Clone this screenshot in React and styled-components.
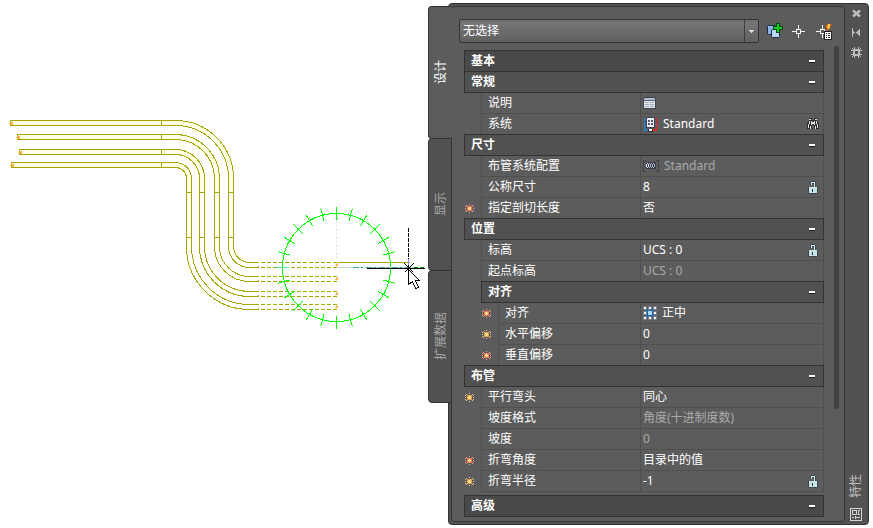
import React, { useState } from 'react';
import styled, { createGlobalStyle } from 'styled-components';

const sections = [
  { title: '基本', dark: true, rows: [] },
  {
    title: '常规',
    rows: [
      { label: '说明', icon: 'sheet' },
      { label: '系统', value: 'Standard', icon: 'system', action: 'find' }
    ]
  },
  {
    title: '尺寸',
    rows: [
      { label: '布管系统配置', value: 'Standard', icon: 'routing', muted: true },
      { label: '公称尺寸', value: '8', action: 'lock' },
      { label: '指定剖切长度', value: '否', marker: 'red' }
    ]
  },
  {
    title: '位置',
    rows: [
      { label: '标高', value: 'UCS : 0', action: 'lock' },
      { label: '起点标高', value: 'UCS : 0', muted: true }
    ]
  },
  {
    title: '对齐',
    nested: true,
    rows: [
      { label: '对齐', value: '正中', icon: 'align', marker: 'red' },
      { label: '水平偏移', value: '0', marker: 'yellow' },
      { label: '垂直偏移', value: '0', marker: 'red' }
    ]
  },
  {
    title: '布管',
    rows: [
      { label: '平行弯头', value: '同心', marker: 'yellow' },
      { label: '坡度格式', value: '角度(十进制度数)', muted: true },
      { label: '坡度', value: '0', muted: true },
      { label: '折弯角度', value: '目录中的值', marker: 'red' },
      { label: '折弯半径', value: '-1', marker: 'yellow', action: 'lock' }
    ]
  },
  { title: '高级', dark: true, spaced: true, rows: [] }
];

// top/left are where a pipe starts, x is its left wall in the vertical run
const pipes = [
  { left: 10, top: 120, x: 228, bottom: 262 },
  { left: 17, top: 134, x: 214, bottom: 276 },
  { left: 19, top: 149, x: 199, bottom: 291 },
  { left: 11, top: 162, x: 186, bottom: 304 }
];

const Pipe = ({ left, top, x, bottom }) => {
  const outer = x + 5 - 175;
  const inner = x - 175;
  const lowOuter = 249 - x;
  const lowInner = 244 - x;
  return (
    <g>
      <path
        d={`M${left} ${top}H175A${outer} ${outer} 0 0 1 ${x + 5} 178V192H${x}V178A${inner} ${inner} 0 0 0 175 ${top + 5}H${left}Z`}
        fill="#ffffe6"
      />
      <path d={`M161 ${top}V${top + 5}M${x} 237H${x + 5}M258 ${bottom + 3}V${bottom + 5}`} />
      <path
        d={`M${x + 5} 192V246A${lowInner} ${lowInner} 0 0 0 249 ${bottom}H258M${x} 192V246A${lowOuter} ${lowOuter} 0 0 0 249 ${bottom + 5}H258`}
      />
      <path d={`M260 ${bottom}H336M260 ${bottom + 5}H336`} strokeDasharray="4 2" />
      <path d={`M${left - 2} ${top + 3}h4m-3 -1h3m-2 2h2`} stroke="#f5b04c" />
      <path d={`M334 ${bottom + 3}h3m-2 -1h2m-1 -1h1`} stroke="#ffb04a" />
    </g>
  );
};

const Drawing = () => (
  <Canvas viewBox="0 0 428 528" role="img" aria-label="布管">
    <g transform="translate(0.5 0.5)" fill="none" shapeRendering="crispEdges">
      <g stroke="#a6a600">
        {pipes.map((pipe) => (
          <Pipe key={pipe.x} {...pipe} />
        ))}
        <path d="M337 262H409" />
      </g>
      <path d="M336 216V257" stroke="#c4c4c4" strokeDasharray="1 3" />
      <path d="M334 218h4m-3 1h2" stroke="#d0d0d0" />
      <g stroke="#00ff00">
        <circle cx="336" cy="267" r="54" />
        {Array.from({ length: 24 }, (_, i) => (
          <path key={i} d="M336 206V219" transform={`rotate(${i * 15} 336 267)`} />
        ))}
      </g>
      <path d="M276 267H288" stroke="#58e0c0" />
      <path d="M337 267H418" stroke="#b9dccb" />
      <path d="M352 267H410" stroke="#3aa0a0" strokeDasharray="6 2 2 3" />
      <path d="M413 267H424" stroke="#009000" strokeDasharray="4 2" />
      <path d="M366 268H424M408 263V284" stroke="#000" />
      <path d="M408 227V263" stroke="#000" strokeDasharray="4 1" />
      <path d="M408 258V264" stroke="#8c8cff" />
      <path d="M404 263L413 272M413 263L404 272" stroke="#000" />
      <path
        d="M408 269V284L412 281L415 288L418 287L415 280H419Z"
        fill="#fff"
        stroke="#000"
      />
    </g>
  </Canvas>
);

const Marker = ({ tone }) => (
  <MarkerSvg viewBox="0 0 9 9" shapeRendering="crispEdges">
    <path
      d="M4 0h1v1h-1zM4 8h1v1h-1zM0 4h1v1h-1zM8 4h1v1h-1zM1 1h1v1h-1zM7 1h1v1h-1zM1 7h1v1h-1zM7 7h1v1h-1zM0 2h1v1h-1zM8 2h1v1h-1zM0 6h1v1h-1zM8 6h1v1h-1z"
      fill={tone === 'red' ? '#f99a90' : '#e9c08a'}
    />
    <path
      d="M3 2h3v5h-3zM2 3h5v3h-5zM2 2h1v1h-1zM6 2h1v1h-1zM2 6h1v1h-1zM6 6h1v1h-1z"
      fill={tone === 'red' ? '#f57a5e' : '#e0a050'}
    />
    <path d="M3 3h3v3h-3z" fill={tone === 'red' ? '#ffb45c' : '#ffcc5e'} />
    <path d="M4 3h1v3h-1zM3 4h3v1h-3z" fill="#ffe690" />
  </MarkerSvg>
);

const LockIcon = () => (
  <svg width="10" height="13" viewBox="0 0 10 13" shapeRendering="crispEdges">
    <path d="M3 0h4v1H3zM2 1h1v3H2zM7 1h1v5H7zM4 2h2v1H4z" fill="#3a474e" />
    <path d="M3 1h4v1H3zM3 2h1v2H3zM6 2h1v4H6z" fill="#d3e8e8" />
    <path d="M0 6h10v6H0zM1 12h8v1H1z" fill="#3a474e" />
    <path d="M1 6h8v6H1z" fill="#c9e4e4" />
    <path d="M4 8h1v3H4z" fill="#24343a" />
  </svg>
);

const FindIcon = () => (
  <svg width="12" height="12" viewBox="0 0 12 12" shapeRendering="crispEdges">
    <path d="M2 0h3v2h2V0h3v3h1v2h1v6H7V7H5v4H0V5h1V3h1z" fill="#2c2c2c" />
    <path
      d="M2 1h2v1H2zM8 1h2v1H8zM2 3h1v3H2zM4 3h1v4H4zM7 3h1v4H7zM9 3h1v3H9zM1 6h1v4H1zM3 8h1v3H3zM8 8h1v3H8zM10 6h1v4h-1zM5 4h2v2H5z"
      fill="#e2e2e2"
    />
  </svg>
);

const valueIcons = {
  sheet: (
    <svg width="13" height="12" viewBox="0 0 13 12" shapeRendering="crispEdges">
      <path d="M0 0h13v12H0z" fill="#3c4250" />
      <path d="M1 1h11v10H1z" fill="#e3e7ec" />
      <path d="M1 1h11v2H1z" fill="#aebccd" />
      <path d="M1 3h11v1H1z" fill="#5b6472" />
      <path d="M2 5h4v1H2zM7 5h4v1H7zM2 7h4v1H2zM7 7h4v1H7zM2 9h4v1H2zM7 9h4v1H7z" fill="#a3adba" />
    </svg>
  ),
  system: (
    <svg width="15" height="16" viewBox="0 0 15 16" shapeRendering="crispEdges">
      <path d="M1 3h2v1H2v9h2v2H1z" fill="#1488e8" />
      <path d="M12 2h2v1h-2zM13 3h1v12h-1zM10 13h3v2h-3z" fill="#e22626" />
      <path d="M3 1h9v11H3z" fill="#3f4256" />
      <path d="M4 2h7v9H4z" fill="#edf0f5" />
      <path d="M7 0h1v2H7z" fill="#5747a8" />
      <path d="M5 4h2v2H5zM8 4h2v2H8zM5 7h2v2H5zM8 7h2v2H8z" fill="#535b70" />
      <path d="M5 13h5v3H5z" fill="#252932" />
      <path d="M6 13h3v2H6z" fill="#fff" />
    </svg>
  ),
  routing: (
    <svg width="16" height="12" viewBox="0 0 16 12" shapeRendering="crispEdges">
      <path d="M0 0h3v1H1v10h2v1H0zM13 0h3v12h-3v-1h2V1h-2z" fill="#3d424e" />
      <path d="M3 2h10v7H3z" fill="#373d4b" />
      <path d="M4 3h1v1H4zM4 7h1v1H4zM3 4h1v3H3zM5 4h1v3H5z" fill="#eceff5" />
      <path d="M6 3h1v1H6zM7 4h1v3H7zM6 7h1v1H6zM8 3h1v1H8zM9 4h1v3H9zM8 7h1v1H8zM10 3h1v1h-1zM11 4h1v3h-1zM10 7h1v1h-1z" fill="#aeb6c5" />
    </svg>
  ),
  align: (
    <svg width="14" height="14" viewBox="0 0 14 14" shapeRendering="crispEdges">
      <path d="M0 0h4v4H0zM5 0h4v4H5zM10 0h4v4h-4zM0 5h4v4H0zM10 5h4v4h-4zM0 10h4v4H0zM5 10h4v4H5zM10 10h4v4h-4z" fill="#777e88" />
      <path d="M1 1h2v2H1zM6 1h2v2H6zM11 1h2v2h-2zM1 6h2v2H1zM11 6h2v2h-2zM1 11h2v2H1zM6 11h2v2H6zM11 11h2v2h-2z" fill="#eef1f4" />
      <path d="M3 4h8v1H3zM3 9h8v1H3zM4 3h1v8H4zM9 3h1v8H9z" fill="#1263b8" />
      <path d="M5 5h4v4H5z" fill="#a7d8f5" />
    </svg>
  )
};

const Section = ({ title, dark, nested, spaced, rows }) => {
  const [open, setOpen] = useState(true);

  return (
    <SectionBox $nested={nested} $spaced={spaced}>
      <SectionHeader $dark={dark}>
        <SectionTitle>{title}</SectionTitle>
        <ToggleButton aria-label={title} aria-expanded={open} onClick={() => setOpen(!open)}>
          <Minus />
        </ToggleButton>
      </SectionHeader>
      {open && rows.length > 0 && (
        <PropertyTable>
          <tbody>
            {rows.map((row) => (
              <tr key={row.label}>
                <MarkerCell>{row.marker && <Marker tone={row.marker} />}</MarkerCell>
                <LabelCell scope="row" $nested={nested}>
                  {row.label}
                </LabelCell>
                <ValueCell $muted={row.muted}>
                  <ValueLine>
                    {valueIcons[row.icon]}
                    <span>{row.value}</span>
                    {row.action && (
                      <RowButton aria-label={row.label}>
                        {row.action === 'lock' ? <LockIcon /> : <FindIcon />}
                      </RowButton>
                    )}
                  </ValueLine>
                </ValueCell>
              </tr>
            ))}
          </tbody>
        </PropertyTable>
      )}
    </SectionBox>
  );
};

const Toolbar = () => (
  <ToolbarBox>
    <SelectBox>
      <SelectionSelect aria-label="选择">
        <option>无选择</option>
      </SelectionSelect>
      <SelectArrow>
        <svg width="5" height="3" viewBox="0 0 5 3" shapeRendering="crispEdges">
          <path d="M0 0h5v1H4v1H3v1H2V2H1V1H0z" fill="#e0e0e0" />
        </svg>
      </SelectArrow>
    </SelectBox>
    <IconButton aria-label="添加到选择">
      <svg width="16" height="16" viewBox="0 0 16 16">
        <rect x="0.500" y="2.500" width="9" height="9" rx="1" fill="#8db4e6" stroke="#1e2c42" />
        <rect x="4.500" y="6.500" width="8" height="8" rx="1" fill="#b9d6f7" stroke="#1e2c42" />
        <path d="M9 0h4v3h3v4h-3v3H9V7H6V3h3z" fill="#0a4a10" />
        <path d="M10 1h2v3h3v2h-3v3h-2V6H7V4h3z" fill="#10d020" />
      </svg>
    </IconButton>
    <IconButton aria-label="选择对象">
      <svg width="16" height="16" viewBox="0 0 16 16" shapeRendering="crispEdges">
        <path d="M7.500 2V6M7.500 11V15M1 8.500H5M10 8.500H14M5.500 6.500H9.500V10.500H5.500Z" fill="none" stroke="#f4f4f4" />
      </svg>
    </IconButton>
    <IconButton aria-label="快速选择">
      <svg width="18" height="17" viewBox="0 0 18 17">
        <path d="M7.500 2V6M7.500 11V15M1 8.500H5M5.500 6.500H9.500V10.500H5.500Z" fill="none" stroke="#f4f4f4" shapeRendering="crispEdges" />
        <path d="M12 1H17L14.500 4H16.500L10.500 9L12.500 5H10.500Z" fill="#ff9a1c" stroke="#923b08" strokeWidth="0.500" />
        <path d="M13 2H15L13 5H14.500" fill="none" stroke="#ffe28a" />
        <g shapeRendering="crispEdges">
          <path d="M9 8h8v9H9z" fill="#222" />
          <path d="M10 9h6v7h-6z" fill="#fff" />
          <path d="M11 10h1v1h-1zM13 10h2v1h-2zM11 12h1v1h-1zM13 12h2v1h-2zM11 14h1v1h-1zM13 14h2v1h-2z" fill="#222" />
        </g>
      </svg>
    </IconButton>
  </ToolbarBox>
);

const TitleStrip = () => (
  <Strip>
    <StripButton aria-label="关闭">
      <svg width="9" height="9" viewBox="0 0 9 9">
        <path d="M1 1.500L8 7.500M8 1.500L1 7.500" stroke="#bcbcbc" strokeWidth="2.600" />
      </svg>
    </StripButton>
    <StripButton aria-label="自动隐藏">
      <svg width="9" height="9" viewBox="0 0 9 9" shapeRendering="crispEdges">
        <path d="M0 0h1v9H0zM1 3h1v3H1zM2 4h1v1H2zM7 1h1v7H7zM6 2h1v5H6zM5 3h1v3H5zM4 4h1v1H4z" fill="#bcbcbc" />
      </svg>
    </StripButton>
    <StripButton aria-label="设置">
      <svg width="11" height="11" viewBox="0 0 11 11" shapeRendering="crispEdges">
        <path
          d="M3 2h5v1h1v5H8v1H3V8H2V3h1zM4 4v3h3V4zM1 1h1v1H1zM9 1h1v1H9zM1 9h1v1H1zM9 9h1v1H9zM2 2h1v1H2zM8 2h1v1H8zM2 8h1v1H2zM8 8h1v1H8zM3 0h1v2H3zM7 0h1v2H7zM3 9h1v2H3zM7 9h1v2H7zM0 3h2v1H0zM9 3h2v1H9zM0 7h2v1H0zM9 7h2v1H9z"
          fill="#bcbcbc"
          fillRule="evenodd"
        />
      </svg>
    </StripButton>
    <StripTitle>特性</StripTitle>
    <StripButton aria-label="特性">
      <svg width="12" height="13" viewBox="0 0 12 13" shapeRendering="crispEdges">
        <path d="M0.500 0.500H11.500V12.500H0.500Z" fill="none" stroke="#d4d4d4" />
        <path d="M2.500 2.500H6.500V6.500H2.500ZM2 9.500H4M5 9.500H10M8.500 2V7M8 2.500H10M8 6.500H10M5.500 8V11" fill="none" stroke="#d4d4d4" />
      </svg>
    </StripButton>
  </Strip>
);

const tabs = ['设计', '显示', '扩展数据'];

const App = () => {
  const [activeTab, setActiveTab] = useState('设计');

  return (
    <Page>
      <GlobalStyle />
      <Drawing />
      <Palette>
        <TabList role="tablist">
          {tabs.map((tab) => (
            <Tab
              key={tab}
              role="tab"
              aria-selected={tab === activeTab}
              $active={tab === activeTab}
              onClick={() => setActiveTab(tab)}
            >
              <VerticalText>{tab}</VerticalText>
            </Tab>
          ))}
        </TabList>
        <Frame>
          <Content>
            <Toolbar />
            <Body>
              <Properties>
                {sections.map((section) => (
                  <Section key={section.title} {...section} />
                ))}
              </Properties>
              <ScrollTrack>
                <ScrollThumb />
              </ScrollTrack>
            </Body>
          </Content>
          <TitleStrip />
        </Frame>
      </Palette>
    </Page>
  );
};

export default App;

const GlobalStyle = createGlobalStyle`
  * {
    box-sizing: border-box;
  }
  body {
    margin: 0;
    background: #fff;
    font-family: 'Noto Sans', 'Noto Sans CJK SC', sans-serif;
    font-size: 12px;
    line-height: 20px;
  }
  button {
    padding: 0;
    border: 0;
    background: none;
    color: inherit;
    font: inherit;
    cursor: pointer;
  }
  svg {
    display: block;
    flex-shrink: 0;
  }
`;

const Page = styled.main`
  display: grid;
  grid-template-columns: minmax(0, 1fr) minmax(441px, 50%);
  align-items: start;
  padding-right: 4px;
`;

const Canvas = styled.svg`
  width: 100%;
`;

const Palette = styled.aside`
  display: flex;
  align-items: flex-start;
  padding-top: 3px;
  color: #fff;
`;

const TabList = styled.div`
  display: flex;
  flex-direction: column;
  flex: 0 0 24px;
  margin: 3px -4px 0 0;
  position: relative;
  z-index: 1;
`;

const Tab = styled.button`
  display: flex;
  align-items: center;
  justify-content: center;
  height: 133px;
  padding-left: 2px;
  border: 1px solid #333;
  border-right-color: ${({ $active }) => ($active ? '#5c5c5c' : '#333')};
  border-radius: 4px 0 0 4px;
  background: ${({ $active }) => ($active ? '#5c5c5c' : '#515151')};
  color: ${({ $active }) => ($active ? '#fff' : '#a8a8a8')};
  & + & {
    margin-top: -1px;
  }
`;

const VerticalText = styled.span`
  writing-mode: vertical-rl;
  text-orientation: sideways;
  transform: rotate(180deg);
`;

const Frame = styled.div`
  display: flex;
  flex: 1;
  min-width: 0;
  padding: 2px 0 2px 2px;
  border: 1px solid #333;
  border-radius: 4px;
  background: #525252;
`;

const Content = styled.div`
  flex: 1;
  min-width: 0;
  padding: 12px 5px 4px 7px;
  border: 1px solid #333;
  border-radius: 4px;
  background: #5c5c5c;
`;

const ToolbarBox = styled.div`
  display: flex;
  align-items: center;
  gap: 8px;
  padding-right: 8px;
`;

const SelectBox = styled.div`
  position: relative;
  flex: 1;
`;

const SelectionSelect = styled.select`
  display: block;
  width: 100%;
  height: 24px;
  padding: 0 20px 0 3px;
  border: 1px solid #333;
  border-radius: 2px;
  appearance: none;
  background: linear-gradient(#6b6b6b, #767676 12%, #606060);
  color: #fff;
  font: inherit;
`;

const SelectArrow = styled.span`
  position: absolute;
  top: 1px;
  right: 1px;
  bottom: 1px;
  display: flex;
  align-items: center;
  justify-content: center;
  width: 14px;
  border-left: 1px solid #3c3c3c;
  pointer-events: none;
`;

const IconButton = styled.button`
  display: flex;
  align-items: center;
  width: 16px;
  height: 18px;
`;

const Body = styled.div`
  display: flex;
  gap: 10px;
  padding: 3px 0 0 5px;
`;

const Properties = styled.div`
  flex: 1;
  min-width: 0;
  padding-top: 5px;
`;

const SectionBox = styled.section`
  margin-top: ${({ $spaced }) => ($spaced ? '3px' : '-1px')};
  margin-left: ${({ $nested }) => ($nested ? '17px' : '0')};
`;

const SectionHeader = styled.div`
  display: flex;
  align-items: center;
  justify-content: space-between;
  height: 22px;
  padding: 0 8px 0 6px;
  border: 1px solid #333;
  background: ${({ $dark }) => ($dark ? '#494949' : '#515151')};
  position: relative;
`;

const SectionTitle = styled.h2`
  margin: 0;
  font-size: 12px;
  font-weight: 700;
`;

const ToggleButton = styled.button`
  display: flex;
  align-items: center;
  height: 20px;
`;

const Minus = styled.span`
  width: 6px;
  height: 3px;
  border-bottom: 1px solid #222;
  background: #fff;
`;

const PropertyTable = styled.table`
  width: 100%;
  border-spacing: 0;
  table-layout: fixed;
`;

const MarkerCell = styled.td`
  width: 17px;
  height: 21px;
  padding: 0 0 0 1px;
`;

const MarkerSvg = styled.svg`
  width: 9px;
  height: 9px;
`;

const LabelCell = styled.th`
  width: ${({ $nested }) => ($nested ? '142px' : '159px')};
  height: 21px;
  padding: 0 0 0 6px;
  border-left: 1px solid #4f4f4f;
  border-bottom: 1px solid #4f4f4f;
  font-weight: 400;
  text-align: left;
`;

const ValueCell = styled.td`
  height: 21px;
  padding: 0 4px 0 2px;
  border: 1px solid #4f4f4f;
  border-top: 0;
  color: ${({ $muted }) => ($muted ? '#aaa' : '#fff')};
`;

const ValueLine = styled.div`
  display: flex;
  align-items: center;
  gap: 5px;
  height: 20px;
`;

const RowButton = styled.button`
  display: flex;
  align-items: center;
  justify-content: center;
  width: 12px;
  height: 16px;
  margin-left: auto;
`;

const ScrollTrack = styled.div`
  width: 5px;
`;

const ScrollThumb = styled.div`
  height: 77%;
  border-radius: 3px;
  background: #424242;
`;

const Strip = styled.div`
  display: flex;
  flex-direction: column;
  align-items: center;
  width: 23px;
  padding: 3px 1px 1px 0;
  gap: 10px;
`;

const StripButton = styled.button`
  display: flex;
  align-items: center;
`;

const StripTitle = styled(VerticalText)`
  margin-top: auto;
  color: #c0c0c0;
`;
